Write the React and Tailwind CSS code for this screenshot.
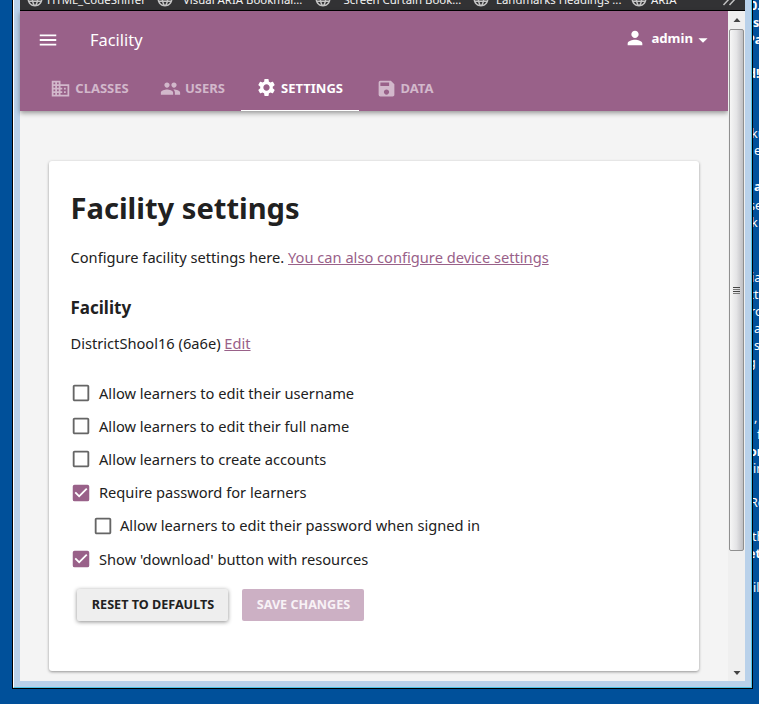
import React from "react";
import { MdMenu, MdBusiness, MdPeople, MdSettings, MdSave, MdPerson, MdArrowDropDown, MdCheckBox, MdCheckBoxOutlineBlank, MdLanguage } from "react-icons/md";

const bookmarks = [
  { label: "HTML_CodeSniffer", width: "w-[130px]", gap: "ml-[3px]" },
  { label: "Visual ARIA Bookmar...", width: "w-[158px]", gap: "ml-[9px]" },
  { label: "'Screen Curtain Book...", width: "w-[158px]", gap: "ml-[9px]" },
  { label: "Landmarks Headings ...", width: "w-[158px]", gap: "ml-[6px]" },
  { label: "ARIA", width: "w-[80px]", gap: "ml-[3px]" },
];

const tabs = [
  { label: "CLASSES", Icon: MdBusiness, width: "w-[110px]" },
  { label: "USERS", Icon: MdPeople, width: "w-[96px]" },
  { label: "SETTINGS", Icon: MdSettings, width: "w-[118px]", active: true },
  { label: "DATA", Icon: MdSave, width: "w-[92px]" },
];

const options = [
  { label: "Allow learners to edit their username" },
  { label: "Allow learners to edit their full name" },
  { label: "Allow learners to create accounts" },
  { label: "Require password for learners", checked: true },
  { label: "Allow learners to edit their password when signed in", nested: true },
  { label: "Show 'download' button with resources", checked: true },
];

const desktopText = [
  { y: 6, text: "0.", bold: true, x: -3 }, { y: 23, text: "s", bold: true, x: 0 }, { y: 40, text: "Pa", bold: true, x: -6 }, { y: 74, text: "d!", bold: true, x: -5 },
  { y: 134, text: "ku", x: -2 }, { y: 151, text: "e", x: 1 }, { y: 187, text: "a", bold: true, x: 1 }, { y: 206, text: "se", x: -4 },
  { y: 223, text: "k", x: -2 }, { y: 278, text: "ia", x: -2 }, { y: 295, text: "ct", x: -5 }, { y: 312, text: "ro", x: -3 }, { y: 329, text: "a", x: 1 },
  { y: 346, text: "s", x: 1 }, { y: 363, text: "g", x: -5 }, { y: 418, text: ",", x: 1 }, { y: 435, text: "f", x: 4 }, { y: 452, text: "or", bold: true, x: -4 },
  { y: 469, text: "in", x: 0 }, { y: 503, text: "Re", x: -3 }, { y: 537, text: "th", x: -1 }, { y: 554, text: "et", bold: true, x: -5 }, { y: 588, text: "il", x: 0 },
];

function DesktopText() {
  return (
    <div className="relative h-[704px] w-[6px] overflow-hidden text-[12.5px] leading-4 text-white">
      {desktopText.map(({ y, x, text, bold }) => (
        <span key={y} className={`absolute whitespace-pre ${bold ? "font-bold" : ""}`} style={{ top: y - 8, left: x }}>{text}</span>
      ))}
    </div>
  );
}

function BookmarksBar() {
  return (
    <div className="flex h-[11px] shrink-0 overflow-hidden border-b border-black bg-[#323234] pl-[6px] text-[11.4px] leading-4 text-[#f2f2f2]">
      {bookmarks.map(({ label, width, gap }) => (
        <div key={label} className={`-mt-2 flex h-4 shrink-0 whitespace-nowrap ${width}`}>
          <MdLanguage className="-mt-0.5 size-[18px] shrink-0 text-[#c4c4c4]" />
          <span className={gap}>{label}</span>
        </div>
      ))}
      <svg className="ml-[12px] h-[10px] w-[14px] shrink-0" viewBox="0 0 14 10" fill="none" stroke="#c0c0c0" strokeWidth="1.5"><path d="M1.500 5 7.500 -1.500M7.500 5 13.500 -1.500" /></svg>
    </div>
  );
}

function AppBar() {
  return (
    <header className="flex h-[100px] shrink-0 flex-col bg-[#996189] text-white shadow-[0_2px_5px_rgba(0,0,0,0.4)]">
      <div className="flex h-[56px] items-center pr-[14px] pl-[17px]">
        <MdMenu className="mt-px size-[22px]" />
        <span className="mt-0.5 ml-[31px] text-[16.4px]">Facility</span>
        <div className="ml-auto flex items-center">
          <MdPerson className="-mt-0.5 size-[22px]" />
          <span className="ml-[5px] text-[13.2px] font-bold">admin</span>
          <MdArrowDropDown className="mt-0.5 -ml-px size-[22px]" />
        </div>
      </div>
      <nav className="flex h-[44px] pl-[15px]">
        {tabs.map(({ label, Icon, width, active }) => (
          <div key={label} className={`flex items-center justify-center text-[13px] font-bold ${width} ${active ? "border-b border-white" : "text-[#d2b8cb]"}`}>
            <Icon className="-ml-px mr-1 size-[21px] -translate-y-px" />
            {label}
          </div>
        ))}
      </nav>
    </header>
  );
}

function Scrollbar() {
  return (
    <div className="flex w-[17px] shrink-0 flex-col items-center bg-[#efefef]">
      <svg className="h-[18px] w-[8px] shrink-0" viewBox="0 0 8 18" fill="#444"><path d="M4 7 7.5 11H.5Z" /></svg>
      <div className="flex h-[522px] w-[15px] flex-col items-center justify-center gap-px rounded-[2px] border border-[#8f8f8f] bg-linear-to-r from-[#f6f6f6] via-[#e4e4e6] to-[#bfbfc3] pr-px">
        <i className="h-px w-[7px] bg-[#444]" /><i className="h-px w-[7px] bg-[#777]" /><i className="h-px w-[7px] bg-[#444]" /><i className="h-px w-[7px] bg-[#777]" />
      </div>
      <svg className="mt-auto h-[18px] w-[8px] shrink-0" viewBox="0 0 8 18" fill="#444"><path d="M.5 8H7.5L4 12Z" /></svg>
    </div>
  );
}

function SettingsCard() {
  return (
    <main className="mt-[50px] ml-[29px] h-[510px] w-[650px] rounded-[3px] bg-white px-[21.5px] shadow-[0_1px_3px_rgba(0,0,0,0.4)]">
      <h1 className="pt-[27px] text-[29.1px] leading-[40px] font-bold">Facility settings</h1>
      <p className="mt-[19px] leading-[20px]">Configure facility settings here. <a className="text-[#996189] underline">You can also configure device settings</a></p>
      <h2 className="mt-[29px] text-[17px] leading-[24px] font-bold">Facility</h2>
      <p className="mt-[13px] leading-[20px]">DistrictShool16 (6a6e) <a className="text-[#996189] underline">Edit</a></p>
      <div className="mt-[24px] -ml-[0.5px]">
        {options.map(({ label, checked, nested }) => (
          <label key={label} className={`flex h-[33.2px] items-center ${nested ? "pl-[22px]" : ""}`}>
            {checked ? <MdCheckBox className="-mt-px size-[22px] text-[#996189]" /> : <MdCheckBoxOutlineBlank className="-mt-px size-[22px] text-[#656565]" />}
            <span className={nested ? "-mt-px ml-[6px]" : "ml-[7px]"}>{label}</span>
          </label>
        ))}
      </div>
      <div className="mt-[13px] ml-[6.5px] flex gap-[14px] text-[12.6px] font-bold">
        <button className="h-8 w-[151px] rounded-[2px] bg-[#eeeeee] pl-px shadow-[0_1px_4px_rgba(0,0,0,0.45)]">RESET TO DEFAULTS</button>
        <button className="h-8 w-[122px] rounded-[2px] bg-[#ccb0c4] pl-px text-[#f8f2f6]">SAVE CHANGES</button>
      </div>
    </main>
  );
}

export default function App() {
  return (
    <div className="flex h-[704px] w-[759px] overflow-hidden bg-[#00509a] pl-3 font-['Noto_Sans',sans-serif] text-[14.65px] text-[#212121]">
      <div className="h-[689px] w-[741px] shrink-0 border-x border-b border-black">
        <div className="flex h-[688px] border-r border-b border-l border-r-[#4fc4e8] border-b-[#4fc4e8] border-l-white bg-[#b9d1ea] pr-[6px] pb-[6px] pl-[6px]">
          <div className="flex w-[725px] flex-col bg-[#f4f4f4]">
            <BookmarksBar />
            <div className="flex min-h-0 flex-1">
              <div className="flex w-[708px] flex-col"><AppBar /><SettingsCard /></div>
              <Scrollbar />
            </div>
          </div>
        </div>
      </div>
      <DesktopText />
    </div>
  );
}
